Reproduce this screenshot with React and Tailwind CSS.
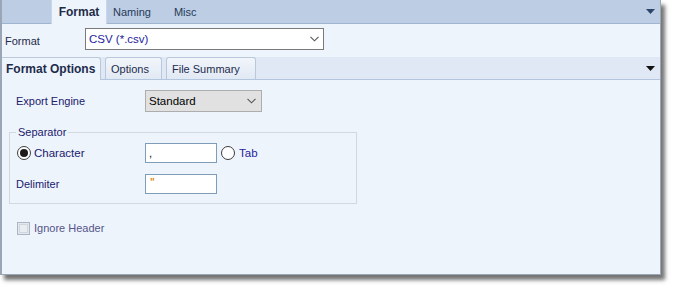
import React from "react";

const Chevron = ({ color = "#555" }) => (
  <svg width="9" height="6" viewBox="0 0 9 6">
    <path d="M0.5 0.8 L4.5 4.8 L8.5 0.8" fill="none" stroke={color} strokeWidth="1.1" />
  </svg>
);

const Triangle = ({ color }) => (
  <svg width="9" height="5" viewBox="0 0 9 5">
    <path d="M0 0 H9 L4.5 5 Z" fill={color} />
  </svg>
);

const Radio = ({ checked }) => (
  <span className="w-[14px] h-[14px] rounded-full border border-[#3c3c3c] bg-white flex items-center justify-center shrink-0">
    {checked && <span className="w-[8px] h-[8px] rounded-full bg-[#1c1c1c]" />}
  </span>
);

export default function App() {
  return (
    <div className="w-[677px] h-[289px] bg-white font-['Liberation_Sans',Arial,sans-serif] text-[11px] leading-[14px]">
      <div className="w-[661px] h-[275px] flex flex-col bg-[#eef4fc] border-l-2 border-r border-b border-[#9aa6b5] shadow-[4px_5px_4px_rgba(0,0,0,0.55)]">
        {/* top tabs */}
        <div className="h-[24px] shrink-0 flex bg-[#bccde4] border-b border-[#9fb4d1]">
          <div className="ml-[49px] w-[56px] h-[24px] bg-[#eef4fc] border-x border-[#c9d6e8] flex items-center justify-center font-bold text-[12px] text-[#1e2c48]">
            Format
          </div>
          <span className="ml-[6px] self-center text-[#273a58]">Naming</span>
          <span className="ml-[23px] self-center text-[#273a58]">Misc</span>
          <span className="ml-auto mr-[5px] self-center">
            <Triangle color="#2b4669" />
          </span>
        </div>

        {/* format row */}
        <div className="h-[33px] shrink-0 flex items-start">
          <span className="w-[83px] pl-[3px] mt-[10px] text-[#1e2b48]">Format</span>
          <div className="mt-[4px] w-[239px] h-[22px] border border-[#7a7a7a] bg-white flex items-center justify-between pl-[3px] pr-[4px] text-[11.5px] text-[#2323a0]">
            <span>CSV (*.csv)</span>
            <Chevron />
          </div>
        </div>

        {/* sub tabs */}
        <div className="h-[23px] shrink-0 flex items-end bg-[#dfe8f4] border-b border-[#b4c6de]">
          <div className="w-[99px] h-[23px] -mb-px bg-[#eef4fc] border-t border-r border-[#b9c8dc] rounded-tr-[3px] flex items-center pl-[4px] font-bold text-[12px] text-[#1d2b4c]">
            Format Options
          </div>
          <div className="ml-[4px] w-[57px] h-[22px] border border-b-0 border-[#b9c8dc] rounded-t-[3px] bg-gradient-to-b from-[#f2f6fb] to-[#e1e9f4] flex items-center pl-[5px] text-[#1d2b4c]">
            Options
          </div>
          <div className="ml-[4px] w-[90px] h-[22px] border border-b-0 border-[#b9c8dc] rounded-t-[3px] bg-gradient-to-b from-[#f2f6fb] to-[#e1e9f4] flex items-center pl-[5px] text-[#1d2b4c]">
            File Summary
          </div>
          <span className="ml-auto mr-[5px] self-center">
            <Triangle color="#111" />
          </span>
        </div>

        {/* content */}
        <div className="flex-1 flex flex-col">
          <div className="mt-[10px] flex items-center">
            <span className="w-[143px] pl-[14px] text-[#20206c]">Export Engine</span>
            <div className="w-[117px] h-[22px] bg-[#e1e1e1] border border-[#adadad] flex items-center justify-between pl-[3px] pr-[5px] text-[11.5px] text-black">
              <span>Standard</span>
              <Chevron />
            </div>
          </div>

          <fieldset className="ml-[7px] mt-[13px] w-[348px] border border-[#d3d8df] pb-[9px]">
            <legend className="ml-[6px] px-[2px] text-[#20206c]">Separator</legend>
            <div className="mt-[4px] h-[20px] flex items-center">
              <div className="w-[135px] pl-[7px] flex items-center">
                <Radio checked />
                <span className="ml-[3px] text-[11.5px] text-[#20206c]">Character</span>
              </div>
              <div className="w-[72px] h-[20px] border border-[#7f9db9] bg-white pl-[3px] flex items-center text-black">,</div>
              <span className="ml-[4px]">
                <Radio />
              </span>
              <span className="ml-[4px] text-[11.5px] text-[#1e1e9a]">Tab</span>
            </div>
            <div className="mt-[11px] h-[20px] flex items-center">
              <span className="w-[135px] pl-[6px] text-[#20206c]">Delimiter</span>
              <div className="w-[72px] h-[20px] border border-[#7f9db9] bg-white pl-[4px] flex items-start pt-[1px] font-bold text-[10px] text-[#e0891c]">"</div>
            </div>
          </fieldset>

          <div className="mt-[17px] pl-[15px] flex items-center">
            <span className="w-[13px] h-[13px] border border-[#aab6c6] bg-[#e4e8ee] flex items-center justify-center">
              <span className="w-[9px] h-[9px] border border-[#d0d6de] bg-[#e9ecf1]" />
            </span>
            <span className="ml-[4px] text-[#55558a]">Ignore Header</span>
          </div>
        </div>
      </div>
    </div>
  );
}
